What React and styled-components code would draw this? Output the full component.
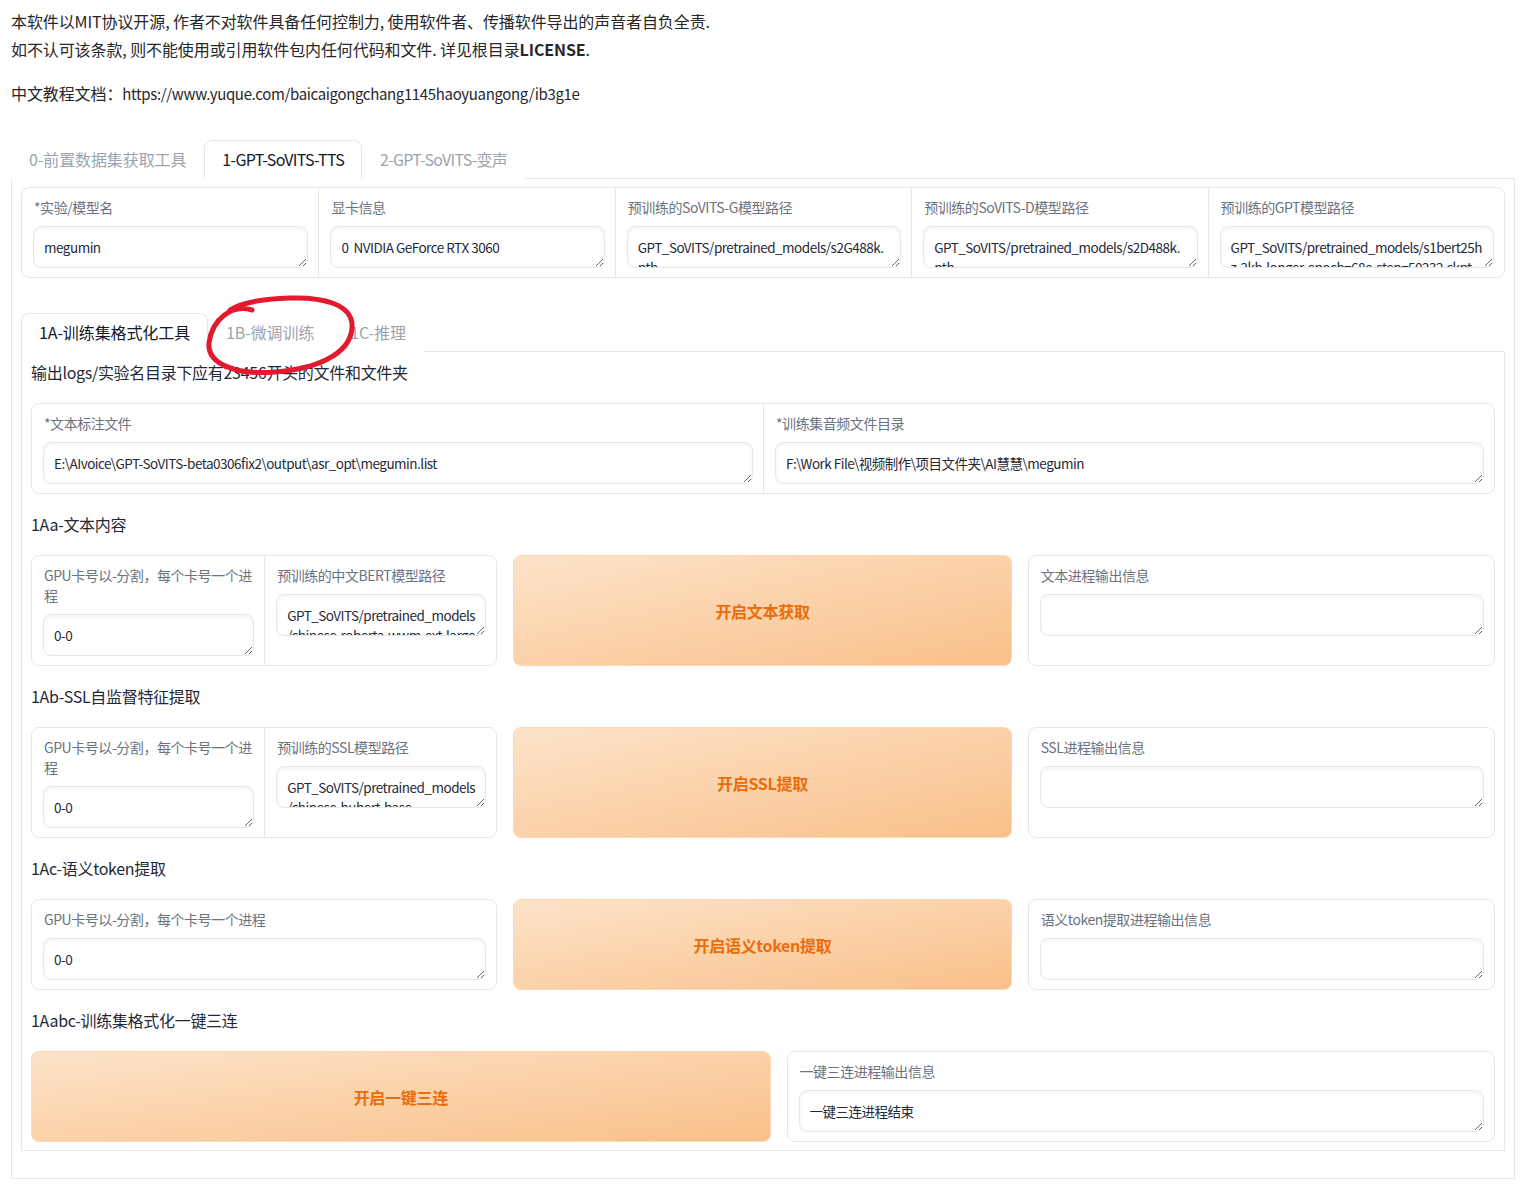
import React from 'react';
import styled, { createGlobalStyle } from 'styled-components';

const font = `"Noto Sans CJK SC", "Lato", sans-serif`;

const GlobalStyle = createGlobalStyle`
  body {
    margin: 0;
    background: #fff;
    font-family: ${font};
    color: #1f2937;
  }
`;

// Whole page column
const Page = styled.div`
  padding: 7px 16px 16px 11px;
`;

const Intro = styled.p`
  margin: 0 0 ${(p) => p.$gap || 0}px;
  font-size: 16px;
  line-height: 28px;
  letter-spacing: -0.1px;
  color: #27272a;

  b {
    font-weight: 700;
  }
`;

const Url = styled.span`
  font-size: 15px;
  line-height: 1;
  letter-spacing: -0.35px;
`;

// Tab strip above a panel
const TabNav = styled.div`
  display: flex;
  height: 38px;
  margin-top: ${(p) => p.$top}px;
  position: relative;
`;

const TabButton = styled.button`
  position: relative;
  z-index: 1;
  box-sizing: border-box;
  height: 39px;
  margin-bottom: -1px;
  padding: 0 17px 3px;
  border: 1px solid ${(p) => (p.$active ? '#e5e7eb' : 'transparent')};
  border-bottom: none;
  border-radius: 8px 8px 0 0;
  background: #fff;
  font-family: ${font};
  font-size: 16px;
  line-height: 20px;
  letter-spacing: ${(p) => (p.$latin ? '-0.7px' : '-0.1px')};
  color: ${(p) => (p.$active ? '#111827' : '#9ca3af')};
  cursor: pointer;
  white-space: nowrap;
`;

const Panel = styled.div`
  border: 1px solid #e5e7eb;
  padding: 8px 9px 27px;
`;

const SubPanel = styled.div`
  border: 1px solid #e5e7eb;
  padding: 10px 9px 8px;
  display: flex;
  flex-direction: column;
  gap: 20px;
`;

// Bordered block holding one or more fields side by side
const Block = styled.div`
  display: grid;
  grid-template-columns: repeat(${(p) => p.$cols || 1}, minmax(0, 1fr));
  border: 1px solid #e5e7eb;
  border-radius: 8px;
  background: #fff;
  overflow: hidden;
`;

const Field = styled.label`
  display: flex;
  flex-direction: column;
  gap: 9px;
  padding: 9px 10px 9px 11px;
  min-width: 0;

  & + & {
    border-left: 1px solid #e5e7eb;
  }
`;

const Label = styled.span`
  display: block;
  margin-left: 1px;
  font-size: 14px;
  line-height: 20px;
  letter-spacing: -0.45px;
  height: ${(p) => (p.$lines || 1) * 20}px;
  color: #6b7280;
`;

const TextBox = styled.textarea`
  box-sizing: border-box;
  width: 100%;
  height: 42px;
  padding: 10px 10px;
  border: 1px solid #e5e7eb;
  border-radius: 8px;
  box-shadow: inset 0 2px 4px rgba(0, 0, 0, 0.05);
  background: #fff;
  font-family: ${font};
  font-size: 13.5px;
  line-height: 20px;
  letter-spacing: -0.5px;
  color: #1f2937;
  resize: vertical;
  overflow: hidden;
  outline: none;
  display: block;
  margin: 0;
`;

const SectionTitle = styled.div`
  font-size: 16px;
  line-height: 21px;
  height: 21px;
  letter-spacing: -0.3px;
  color: #1f2937;
`;

const ActionRow = styled.div`
  display: grid;
  grid-template-columns: ${(p) => p.$cols};
  gap: 16px;
`;

const ActionButton = styled.button`
  border: 1px solid #fcd9b4;
  border-radius: 8px;
  background: linear-gradient(to bottom right, #fde3c9, #f9c089);
  color: #ea6c0a;
  font-family: ${font};
  font-size: 16px;
  font-weight: 700;
  letter-spacing: -0.3px;
  cursor: pointer;
`;

// Hand-drawn red circle lying over the sub tabs
const Annotation = styled.svg`
  position: absolute;
  left: 180px;
  top: -20px;
  width: 180px;
  height: 90px;
  z-index: 3;
  pointer-events: none;
`;

const TextField = ({ label, value = '', lines }) => (
  <Field>
    <Label $lines={lines}>{label}</Label>
    <TextBox rows={1} defaultValue={value} />
  </Field>
);

const gpuLabel = 'GPU卡号以-分割，每个卡号一个进程';

const App = () => (
  <Page>
    <GlobalStyle />
    <Intro $gap={16}>
      本软件以MIT协议开源, 作者不对软件具备任何控制力, 使用软件者、传播软件导出的声音者自负全责.
      <br />
      如不认可该条款, 则不能使用或引用软件包内任何代码和文件. 详见根目录<b>LICENSE</b>.
    </Intro>
    <Intro>
      中文教程文档：<Url>https://www.yuque.com/baicaigongchang1145haoyuangong/ib3g1e</Url>
    </Intro>

    <TabNav $top={33}>
      <TabButton>0-前置数据集获取工具</TabButton>
      <TabButton $active $latin>1-GPT-SoVITS-TTS</TabButton>
      <TabButton $latin>2-GPT-SoVITS-变声</TabButton>
    </TabNav>
    <Panel>
      <Block $cols={5}>
        <TextField label="*实验/模型名" value="megumin" />
        <TextField label="显卡信息" value="0  NVIDIA GeForce RTX 3060" />
        <TextField label="预训练的SoVITS-G模型路径" value="GPT_SoVITS/pretrained_models/s2G488k.pth" />
        <TextField label="预训练的SoVITS-D模型路径" value="GPT_SoVITS/pretrained_models/s2D488k.pth" />
        <TextField
          label="预训练的GPT模型路径"
          value="GPT_SoVITS/pretrained_models/s1bert25hz-2kh-longer-epoch=68e-step=50232.ckpt"
        />
      </Block>

      <TabNav $top={35}>
        <TabButton $active>1A-训练集格式化工具</TabButton>
        <TabButton>1B-微调训练</TabButton>
        <TabButton>1C-推理</TabButton>
        <Annotation viewBox="201 292 180 90">
          <path
            d="M 252 309 C 232 303, 212 318, 209 342 C 207 364, 238 374, 275 371 C 315 368, 350 354, 352 327 C 354 302, 320 296, 290 297 C 262 298, 242 301, 230 309"
            fill="none"
            stroke="#e3192e"
            strokeWidth="5"
            strokeLinecap="round"
          />
        </Annotation>
      </TabNav>
      <SubPanel>
        <SectionTitle>输出logs/实验名目录下应有23456开头的文件和文件夹</SectionTitle>
        <Block $cols={2}>
          <TextField label="*文本标注文件" value="E:\AIvoice\GPT-SoVITS-beta0306fix2\output\asr_opt\megumin.list" />
          <TextField label="*训练集音频文件目录" value="F:\Work File\视频制作\项目文件夹\AI慧慧\megumin" />
        </Block>

        <SectionTitle>1Aa-文本内容</SectionTitle>
        <ActionRow $cols="466fr 498fr 467fr">
          <Block $cols={2}>
            <TextField label={gpuLabel} value="0-0" lines={2} />
            <TextField
              label="预训练的中文BERT模型路径"
              value="GPT_SoVITS/pretrained_models/chinese-roberta-wwm-ext-large"
            />
          </Block>
          <ActionButton>开启文本获取</ActionButton>
          <Block>
            <TextField label="文本进程输出信息" />
          </Block>
        </ActionRow>

        <SectionTitle>1Ab-SSL自监督特征提取</SectionTitle>
        <ActionRow $cols="466fr 498fr 467fr">
          <Block $cols={2}>
            <TextField label={gpuLabel} value="0-0" lines={2} />
            <TextField label="预训练的SSL模型路径" value="GPT_SoVITS/pretrained_models/chinese-hubert-base" />
          </Block>
          <ActionButton>开启SSL提取</ActionButton>
          <Block>
            <TextField label="SSL进程输出信息" />
          </Block>
        </ActionRow>

        <SectionTitle>1Ac-语义token提取</SectionTitle>
        <ActionRow $cols="466fr 498fr 467fr">
          <Block>
            <TextField label={gpuLabel} value="0-0" />
          </Block>
          <ActionButton>开启语义token提取</ActionButton>
          <Block>
            <TextField label="语义token提取进程输出信息" />
          </Block>
        </ActionRow>

        <SectionTitle>1Aabc-训练集格式化一键三连</SectionTitle>
        <ActionRow $cols="739fr 708fr">
          <ActionButton>开启一键三连</ActionButton>
          <Block>
            <TextField label="一键三连进程输出信息" value="一键三连进程结束" />
          </Block>
        </ActionRow>
      </SubPanel>
    </Panel>
  </Page>
);

export default App;
